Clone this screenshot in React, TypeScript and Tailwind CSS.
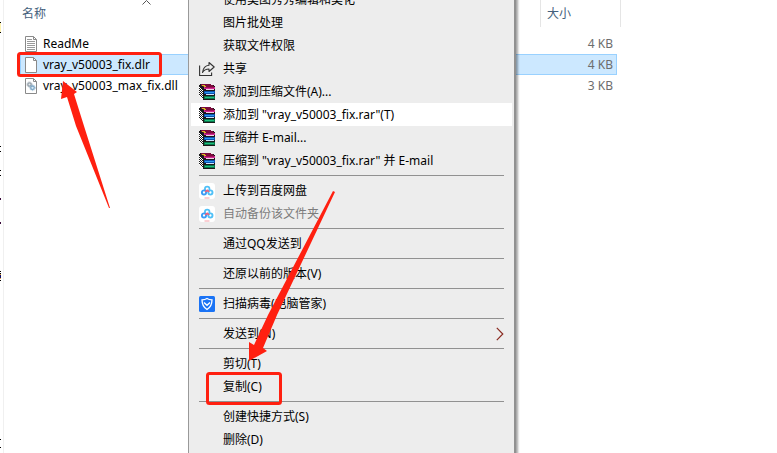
import React from 'react';
import clsx from 'clsx';

type IconName = 'share' | 'rar' | 'cloud' | 'shield';

interface MenuEntry {
  label: string;
  icon?: IconName;
  active?: boolean;
  disabled?: boolean;
  submenu?: boolean;
}

interface FileRow {
  name: string;
  size: string;
  kind: 'text' | 'blank' | 'dll';
  selected?: boolean;
}

const files: FileRow[] = [
  { name: 'ReadMe', size: '4 KB', kind: 'text' },
  { name: 'vray_v50003_fix.dlr', size: '4 KB', kind: 'blank', selected: true },
  { name: 'vray_v50003_max_fix.dll', size: '3 KB', kind: 'dll' },
];

// Each inner list is a group, groups are split by a separator
const menuGroups: MenuEntry[][] = [
  [
    { label: '使用美图秀秀编辑和美化' },
    { label: '图片批处理' },
    { label: '获取文件权限' },
    { label: '共享', icon: 'share' },
    { label: '添加到压缩文件(A)...', icon: 'rar' },
    { label: '添加到 "vray_v50003_fix.rar"(T)', icon: 'rar', active: true },
    { label: '压缩并 E-mail...', icon: 'rar' },
    { label: '压缩到 "vray_v50003_fix.rar" 并 E-mail', icon: 'rar' },
  ],
  [
    { label: '上传到百度网盘', icon: 'cloud' },
    { label: '自动备份该文件夹', icon: 'cloud', disabled: true },
  ],
  [{ label: '通过QQ发送到' }],
  [{ label: '还原以前的版本(V)' }],
  [{ label: '扫描病毒(电脑管家)', icon: 'shield' }],
  [{ label: '发送到(N)', submenu: true }],
  [{ label: '剪切(T)' }, { label: '复制(C)' }],
  [{ label: '创建快捷方式(S)' }, { label: '删除(D)' }],
];

const ShareIcon = () => (
  <svg width="16" height="16" viewBox="0 0 16 16" fill="none" stroke="#333" strokeWidth="1.1">
    <path d="M.6 4.500v10h12v-3" />
    <path d="M10 1.500 15.200 6 10 10.500V8C7 8 5 9 3.500 11.500 4 7.500 6 4.500 10 4.200Z" strokeLinejoin="round" />
  </svg>
);

const RarIcon = () => (
  <svg width="16" height="16" viewBox="0 0 16 16" shapeRendering="crispEdges">
    <path d="M1 0h10l5 2v3l-1 1 1 1v3l-1 1 1 1v3l-1 1H5L0 12V1Z" fill="#1a1a1a" />
    <path d="M2 0h9l4 2v1H5L1 1Z" fill="#7c0b3c" />
    <path d="M5 3h11v2H5Z" fill="#d02a96" />
    <path d="M6 3h9v1H6Z" fill="#a01058" />
    <path d="M3 1h3v1H3ZM5 2h2v1H5Z" fill="#d8c21c" />
    <path d="M7 5h8v1H7Z" fill="#f4d0e4" />
    <path d="M5 7h11v3H5Z" fill="#0b4fae" />
    <path d="M6 8h9v1H6Z" fill="#2c9cf0" />
    <path d="M7 10h8v1H7Z" fill="#c8e4ff" />
    <path d="M5 12h11v3H5Z" fill="#08744a" />
    <path d="M6 13h9v1H6Z" fill="#1fc07c" />
    <path
      d="M0 3h1v1H0ZM1 4h1v1H1ZM2 5h1v1H2ZM3 6h1v1H3ZM0 7h1v1H0ZM1 8h1v1H1ZM2 9h1v1H2ZM3 10h1v1H3ZM0 11h1v1H0ZM1 12h1v1H1ZM2 13h1v1H2ZM3 14h1v1H3ZM0 5h1v1H0ZM1 6h1v1H1ZM2 7h1v1H2ZM3 8h1v1H3ZM0 9h1v1H0ZM1 10h1v1H1ZM2 11h1v1H2ZM3 12h1v1H3Z"
      fill="#fff"
    />
  </svg>
);

const CloudIcon = () => (
  <svg width="16" height="16" viewBox="0 0 16 16" fill="none">
    <rect width="16" height="16" rx="3" fill="#fff" />
    <circle cx="8.200" cy="6" r="2.300" stroke="#4fc0f7" strokeWidth="1.700" />
    <circle cx="5" cy="9.500" r="2.100" stroke="#3a9cf6" strokeWidth="1.900" />
    <circle cx="11.400" cy="9.500" r="2.100" stroke="#4fc0f7" strokeWidth="1.900" />
    <path d="M6.200 8.800 8.200 7.300l2 1.600" stroke="#f4607a" strokeWidth="1.500" />
    <path d="M5.500 15h5" stroke="#f7a0a8" />
  </svg>
);

const ShieldIcon = () => (
  <svg width="16" height="16" viewBox="0 0 16 16" fill="none" stroke="#fff">
    <rect width="16" height="16" rx="1.500" fill="#1a73f5" stroke="none" />
    <path d="M8 2.500c1.500 1 3 1.300 5 1.300 0 4.500-1.500 7.700-5 9.700-3.500-2-5-5.200-5-9.700 2 0 3.500-.3 5-1.300Z" strokeWidth="1.300" />
    <path d="m5 6.500 3 2.700 3-2.700" strokeWidth="1.500" />
  </svg>
);

const menuIcons: Record<IconName, React.FC> = {
  share: ShareIcon,
  rar: RarIcon,
  cloud: CloudIcon,
  shield: ShieldIcon,
};

const FileIcon: React.FC<{ kind: FileRow['kind'] }> = ({ kind }) => (
  <svg width="12" height="16" viewBox="0 0 12 16" fill="none">
    <path d="M.5.5h8l3 3v12H.5Z" fill="#fff" stroke="#8a8a8a" />
    <path d="M8.500.5v3h3" stroke="#8a8a8a" />
    {kind === 'text' && (
      <path d="M2 3.500h5M2 5.500h8M2 7.500h8M2 9.500h8M2 11.500h8M2 13.500h8" stroke="#9a9a9a" />
    )}
    {kind === 'dll' && (
      <>
        <circle cx="4.500" cy="6.500" r="1.700" fill="#e4eaee" stroke="#94a0aa" strokeWidth="1.300" />
        <circle cx="4.500" cy="6.500" r="2.600" stroke="#94a0aa" strokeWidth=".8" strokeDasharray="1 1" />
        <circle cx="7.500" cy="9.800" r="1.800" fill="#dcebf6" stroke="#7fa8c6" strokeWidth="1.300" />
        <circle cx="7.500" cy="9.800" r="2.800" stroke="#7fa8c6" strokeWidth=".8" strokeDasharray="1 1" />
      </>
    )}
  </svg>
);

const FileTable = () => (
  <table className="w-[617px] table-fixed border-separate border-spacing-0 text-left">
    <colgroup>
      <col className="w-[537px]" />
      <col className="w-[80px]" />
    </colgroup>
    <thead>
      <tr className="h-[27px] text-[#44607c]">
        <th className="relative border-r border-[#e5e5e5] p-0 pl-[18px] font-normal">
          名称
          <svg className="absolute left-[138px] top-0" width="9" height="5" viewBox="0 0 9 5" fill="none" stroke="#555">
            <path d="M.5 4.500 4.500.5l4 4" />
          </svg>
        </th>
        <th className="border-r border-[#e5e5e5] p-0 pl-[6px] font-normal">大小</th>
      </tr>
    </thead>
    <tbody>
      <tr className="h-[6px]" />
      {files.map(file => (
        <tr key={file.name}>
          <td colSpan={2} className="h-[21px] p-0 pl-4 pr-1">
            <div
              className={clsx(
                'flex h-[21px] items-center border pl-1 pr-[3px]',
                file.selected ? 'border-[#99d1ff] bg-[#cce8ff]' : 'border-transparent'
              )}
            >
              <FileIcon kind={file.kind} />
              <span className="ml-[6px]">{file.name}</span>
              <span className="ml-auto text-[#6d6d6d]">{file.size}</span>
            </div>
          </td>
        </tr>
      ))}
    </tbody>
  </table>
);

const MenuItem: React.FC<{ entry: MenuEntry }> = ({ entry }) => {
  const Icon = entry.icon ? menuIcons[entry.icon] : null;
  return (
    <li>
      <button
        type="button"
        role="menuitem"
        disabled={entry.disabled}
        className={clsx(
          'flex h-[23px] w-full items-center whitespace-nowrap pl-2 pr-2 text-left',
          entry.active && 'bg-white',
          entry.disabled ? 'text-[#7c7c7c]' : 'text-black'
        )}
      >
        <span className="mr-2 w-4">{Icon && <Icon />}</span>
        {entry.label}
        {entry.submenu && (
          <svg className="ml-auto" width="8" height="14" viewBox="0 0 8 14" fill="none" stroke="#8a2a20" strokeWidth="1.200">
            <path d="m.8.8 6 6.200-6 6.200" />
          </svg>
        )}
      </button>
    </li>
  );
};

const ContextMenu = () => (
  <div
    role="menu"
    className="absolute -top-3 left-[188px] w-[328px] border-l border-r-2 border-l-[#999] border-r-[#919191] bg-[#ededed] pb-8 pl-[2px] pr-[2px] shadow-[2px_0_2px_rgba(0,0,0,0.35)]"
  >
    {menuGroups.map((group, index) => (
      <ul key={index}>
        {index > 0 && <li role="separator" className="mx-2 my-[3px] h-px bg-[#919191]" />}
        {group.map(entry => (
          <MenuItem key={entry.label} entry={entry} />
        ))}
      </ul>
    ))}
  </div>
);

// Red marks drawn over the window
const Annotations = () => (
  <svg className="pointer-events-none absolute left-0 top-0" width="340" height="453" viewBox="0 0 340 453" fill="none">
    <rect x="18.500" y="53.500" width="142" height="22" rx="2" stroke="#ff2010" strokeWidth="3" />
    <rect x="207.500" y="373.500" width="73" height="30" rx="2" stroke="#ff2010" strokeWidth="3" />
    <path d="M63 81 77 92l-3 2 10 32 26 82h-1L76 126 67 97l-6 2Z" fill="#ff2010" />
    <path d="M249 361v-19l5 3 14-30 65-124 2 1-58 123-14 33 4 3Z" fill="#ff2010" />
  </svg>
);

// Sliver of the navigation pane that is still visible
const PaneEdge = () => (
  <svg className="w-[3px] shrink-0" height="453" viewBox="0 0 3 453" shapeRendering="crispEdges">
    <path d="M0 23h1v9H0Z" fill="#fff3b0" />
    <path d="M0 22h1v1H0ZM0 32h1v1H0ZM0 146h1v1H0ZM0 151h1v1H0ZM0 170h1v1H0ZM0 175h1v1H0ZM0 271h1v1H0ZM0 273h1v1H0ZM0 280h1v1H0ZM0 439h1v1H0ZM0 447h1v1H0Z" fill="#000" />
    <path d="M0 198h1v2H0ZM0 222h1v2H0Z" fill="#3a0a3a" />
    <path d="M0 274h1v1H0ZM0 278h1v1H0Z" fill="#e0a040" />
    <path d="M0 275h1v3H0Z" fill="#10106a" />
  </svg>
);

const App: React.FC = () => {
  return (
    <div className="relative flex h-screen w-full overflow-hidden bg-white font-['Noto_Sans','Noto_Sans_CJK_SC',sans-serif] text-[12px] leading-4 text-black">
      <PaneEdge />
      <main className="flex-1 border-l border-[#f0f0f0]">
        <FileTable />
      </main>
      <ContextMenu />
      <Annotations />
    </div>
  );
};

export default App;
